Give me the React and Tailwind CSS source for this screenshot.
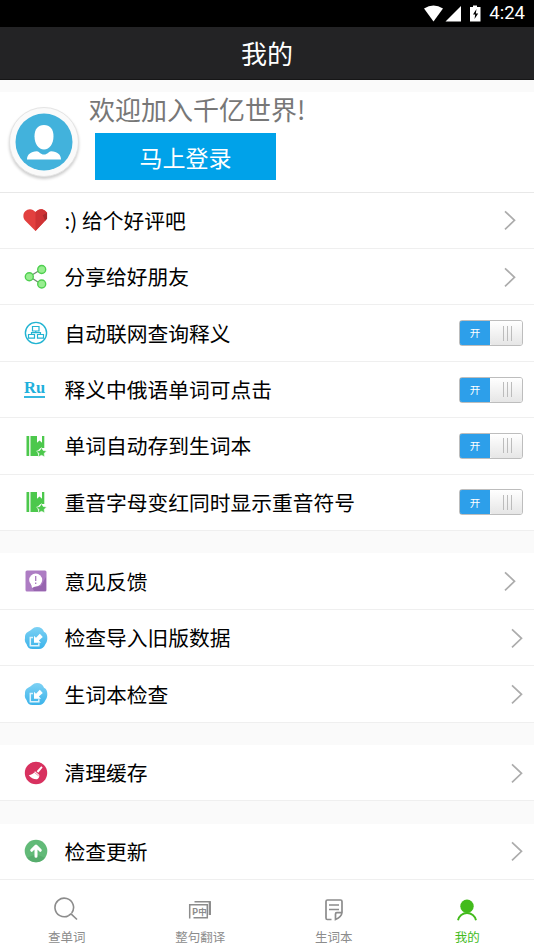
import React, { useState } from 'react';

const HeartIcon = () => (
  <svg width="26" height="24" viewBox="0 0 26 24">
    <path d="M13 23.500 1.900 12.200C-.3 9.500 0 5 2.300 2.900 5.300-.2 10.200 0 13 3.800 16 0 20.300-.2 23.300 2.600 24.500 3.800 25 4 25 5.500L23.500 12.200Z" fill="#e2403f" />
    <path d="M13 3.800C16 0 20.300-.2 23.300 2.600L25 4.500V10l-1.500 2.200L13 23.500Z" fill="#cf3335" />
    <path d="M20.500 7 25 4.500V11l-2 1.500Z" fill="#a92a2d" />
  </svg>
);

const ShareIcon = () => (
  <svg width="24" height="26" viewBox="0 0 24 26">
    <path d="M17 5.500 5.500 12.500 17 20" fill="none" stroke="#6f8f70" strokeWidth="1.300" />
    <g fill="#98ee90" stroke="#4fcf50" strokeWidth="1.400">
      <circle cx="17.700" cy="5.500" r="4" />
      <circle cx="5.300" cy="12.700" r="4" />
      <circle cx="17.700" cy="20" r="4" />
    </g>
  </svg>
);

const NetworkIcon = () => (
  <svg width="24" height="24" viewBox="0 0 24 24" fill="none" stroke="#22b4d2">
    <circle cx="12" cy="12" r="10.600" strokeWidth="1.400" />
    <path d="M8.500 5.500h6.500v4.500H8.500ZM4.500 13.500h6v3.700h-6ZM13.500 13.500h6v3.700h-6ZM11.800 10v1.700M7.500 13.500v-1.800h9v1.800" strokeWidth="1.200" />
  </svg>
);

const RuIcon = () => (
  <span className="-mt-[2px] -ml-[2px] block w-[21px] border-b-2 border-[#35b8e0] font-['Liberation_Serif',serif] text-[16.500px] leading-[17px] font-bold text-[#1fb0dc]">
    Ru
  </span>
);

const BookIcon = () => (
  <svg width="22" height="24" viewBox="0 0 22 24">
    <path d="M1.500 2h2.700v20H1.500zM5.500 2h6.500v6.800l2.500-2.200L17 8.800V2h2.300v12h-3.800l-3.200 3 1 5H5.500z" fill="#4cc84c" />
    <path
      d="m16.500 13.500 1.600 2.900 3.400.6-2.400 2.400.5 3.400-3.100-1.500-3.100 1.500.5-3.400-2.400-2.400 3.400-.6Z"
      fill="#4cc84c"
      stroke="#fff"
      strokeWidth=".500"
    />
  </svg>
);

const FeedbackIcon = () => (
  <svg width="22" height="22" viewBox="0 0 22 22">
    <rect x=".5" y=".5" width="21" height="21" rx="1.500" fill="#ad7cc3" />
    <path d="M21 7v14H9l-2-4 9-1Z" fill="#9765af" />
    <circle cx="10.700" cy="10" r="6.500" fill="#fff" />
    <path d="m6 13 1 5 4-2Z" fill="#fff" />
    <path d="M10.700 6v5M10.700 12.500v1.500" stroke="#a879be" strokeWidth="1.300" />
  </svg>
);

const ImportIcon = () => (
  <svg width="24" height="24" viewBox="0 0 24 24">
    <defs>
      <linearGradient id="cloud" x1="0" y1="0" x2="0" y2="1">
        <stop offset="0" stopColor="#7dd1f4" />
        <stop offset="1" stopColor="#3bb3ea" />
      </linearGradient>
    </defs>
    <path d="M4.500 5.500C7 4.500 9 1 13 1c3.500 0 6 2 7 4.800 2.500 1.200 3.300 3.200 3.300 6.200 0 2-.2 4-1.800 6-1.500 3.500-3.500 5-6.500 5H8.500C5 23 3.300 21 2.500 18 .8 16 .6 14 1 12c-.2-2.500.5-5.200 3.500-6.500Z" fill="url(#cloud)" />
    <path d="M9 11.500H6.300v8.300h8.500v-2.600" fill="none" stroke="#dff3fc" strokeWidth="1.500" />
    <path d="M10 9.800v7h7l-2.200-2.200 4-3.600-3-3.300-3.800 4Z" fill="#fff" />
  </svg>
);

const CleanIcon = () => (
  <svg width="24" height="24" viewBox="0 0 24 24">
    <circle cx="12" cy="12" r="11.200" fill="#d8315f" />
    <path d="m17.300 5.300 1.300 1.200-4.300 5.200-1.700-1.400Z" fill="#fff" />
    <path d="m11 10.300 4.300 3.600c.2 2.100-.5 3.300-2.200 4.300-3.300.2-6-1-8.300-4 2.600-.2 4.600-1.400 6.200-3.900Z" fill="#fff" />
    <path d="m10.200 11.300 4.500 3.600" stroke="#d8315f" strokeWidth=".500" />
  </svg>
);

const UpdateIcon = () => (
  <svg width="24" height="24" viewBox="0 0 24 24">
    <circle cx="12" cy="12" r="11.300" fill="#62ba78" />
    <path d="M3 18.700a11.300 11.300 0 0 0 18 0L14 16h-4Z" fill="#57ad6d" />
    <path d="M12 17.300V8M7.700 11.300 12 7l4.300 4.300" fill="none" stroke="#fff" strokeWidth="3" strokeLinecap="round" strokeLinejoin="round" />
  </svg>
);

const SearchTabIcon = () => (
  <svg width="26" height="26" viewBox="1 0 26 26" fill="none" stroke="#8c8c8c" strokeWidth="1.600">
    <path d="M18.700 17A9.300 9.300 0 1 0 15.500 19.700M15.500 19.700l2.300-1.700M17.500 17.300l6.500 6.200" />
  </svg>
);

const TranslateTabIcon = () => (
  <svg width="26" height="26" viewBox="0 0 26 26" fill="none" stroke="#8c8c8c" strokeWidth="1.500">
    <path d="M2.700 22.500V8.700h17.600v13H6.500M7.500 5.700H23V19" />
    <path d="M22.800 5.500V19" strokeWidth="2.200" />
    <text x="5.300" y="18.500" fill="#8c8c8c" stroke="none" fontSize="9" fontWeight="700" fontFamily="Roboto, sans-serif">P</text>
    <text x="11.300" y="18.500" fill="#8c8c8c" stroke="none" fontSize="8.500" fontWeight="700" fontFamily="'Noto Sans CJK SC', sans-serif">中</text>
  </svg>
);

const NoteTabIcon = () => (
  <svg width="26" height="26" viewBox="0 0 26 26" fill="none" stroke="#8c8c8c" strokeWidth="1.700">
    <path d="M10.500 23.500H6.300Q5 23.500 5 22V5.500Q5 4 6.500 4h13Q21 4 21 5.500v11q-.5 4.500-6.500 7V18q0-1.300 1.300-1.300H21M8 9h10M8 13.500h10" />
  </svg>
);

const MeTabIcon = () => (
  <svg width="26" height="26" viewBox="0 0 26 26">
    <circle cx="13" cy="10.200" r="6.700" fill="#43bb1c" />
    <path d="M4 24.300a9.200 9.200 0 0 1 18 0" fill="none" stroke="#43bb1c" strokeWidth="1.900" />
  </svg>
);

const Chevron = () => (
  <svg width="12" height="20" viewBox="0 0 12 20" fill="none" stroke="#acacac" strokeWidth="1.700">
    <path d="M1 1.300 10.500 10.300 1 19.300" />
  </svg>
);

const Toggle = ({ on, onToggle }) => (
  <button
    onClick={onToggle}
    className={`flex h-[26px] w-[64px] overflow-hidden rounded-[3px] border border-[#bdbdbd] ${on ? "flex-row" : "flex-row-reverse"}`}
  >
    <span className={`-my-px -ml-px flex h-[26px] w-[31px] items-center justify-center rounded-l-[3px] border border-r-0 text-[10.500px] text-white ${on ? "border-[#2583c4] bg-[#2d9fea]" : "border-gray-400 bg-gray-400"}`}>
      {on ? "开" : "关"}
    </span>
    <span className="flex h-full flex-1 items-center justify-center gap-[3px] rounded-l-[2px] bg-linear-to-b from-white to-[#e6e6e6] pl-[2px]">
      <i className="h-[15px] w-px bg-[#bcbcbc]" />
      <i className="h-[15px] w-px bg-[#bcbcbc]" />
      <i className="h-[15px] w-px bg-[#bcbcbc]" />
    </span>
  </button>
);

const groups = [
  [
    { id: 'rate', label: ':) 给个好评吧', icon: HeartIcon, arrow: 'pr-[18px]' },
    { id: 'share', label: '分享给好朋友', icon: ShareIcon, arrow: 'pr-[18px]' },
    { id: 'online', label: '自动联网查询释义', icon: NetworkIcon, toggle: true },
    { id: 'click', label: '释义中俄语单词可点击', icon: RuIcon, toggle: true },
    { id: 'save', label: '单词自动存到生词本', icon: BookIcon, toggle: true },
    { id: 'stress', label: '重音字母变红同时显示重音符号', icon: BookIcon, toggle: true },
  ],
  [
    { id: 'feedback', label: '意见反馈', icon: FeedbackIcon, arrow: 'pr-[18px]' },
    { id: 'import', label: '检查导入旧版数据', icon: ImportIcon, arrow: 'pr-[11px]' },
    { id: 'check', label: '生词本检查', icon: ImportIcon, arrow: 'pr-[11px]' },
  ],
  [{ id: 'clean', label: '清理缓存', icon: CleanIcon, arrow: 'pr-[11px]' }],
  [{ id: 'update', label: '检查更新', icon: UpdateIcon, arrow: 'pr-[11px]' }],
];

const tabs = [
  { label: '查单词', icon: SearchTabIcon },
  { label: '整句翻译', icon: TranslateTabIcon },
  { label: '生词本', icon: NoteTabIcon },
  { label: '我的', icon: MeTabIcon, active: true },
];

const App = () => {
  const [settings, setSettings] = useState({ online: true, click: true, save: true, stress: true });

  const toggle = (id) => {
    setSettings({ ...settings, [id]: !settings[id] });
  };

  return (
    <div className="flex h-[950px] w-[534px] flex-col overflow-hidden bg-[#fafafa] font-['Noto_Sans_CJK_SC',sans-serif]">
      {/* Status bar */}
      <div className="flex h-[27px] shrink-0 items-center justify-end bg-black pr-[9px] text-white">
        <svg width="60" height="18" viewBox="0 0 60 18" fill="#fff">
          <path d="M0 3.500Q9.500-2.300 19 3.500L9.500 16.500Z" />
          <path d="M37 1v15.500H21.500Z" />
          <path d="M49 .500h4V2h3.500v14.500h-10.500V2h3Z" />
          <path d="m52.500 4-3.500 5.500h2.200L50.500 14l3.700-5.500h-2.400Z" fill="#000" />
        </svg>
        <span className="ml-[5px] font-[Roboto,sans-serif] text-[18.500px] leading-[27px]">4:24</span>
      </div>

      <header className="flex h-[53px] shrink-0 items-center justify-center border-b border-[#161617] bg-[#232325] pb-[2px] text-[26px] text-white">
        我的
      </header>

      {/* Profile */}
      <div className="mt-[12px] flex h-[100.500px] shrink-0 border-b border-[#e8e8e8] bg-white">
        <div className="mt-[15px] ml-[9px] flex h-[70px] w-[70px] items-center justify-center rounded-full border border-[#e4e4e4] bg-[#fafafa] shadow-[0_2px_3px_rgba(0,0,0,0.2)]">
          <svg width="58" height="58" viewBox="0 0 58 58">
            <circle cx="29" cy="29" r="28.500" fill="#42b2dc" />
            <path d="M29 12c6 0 9.500 4 9.500 11.500 0 7-4 13-9.500 13s-9.500-6-9.500-13C19.500 16 23 12 29 12Z" fill="#fff" />
            <path d="M12 46.500c0-5 3.500-8 10-8.300 2 0 3.500 3.300 7 3.300s5-3.300 7-3.300c6.500.3 10 3.300 10 8.300Z" fill="#fff" />
          </svg>
        </div>
        <div className="ml-[10px]">
          <div className="h-[41px] text-[26px] leading-[33px] text-[#777]">欢迎加入千亿世界!</div>
          <button className="ml-[6px] block h-[47px] w-[181px] bg-[#00a2e9] text-[23px] leading-[46px] text-white">
            马上登录
          </button>
        </div>
      </div>

      {/* Menu groups */}
      <div className="flex flex-col gap-[22.300px]">
        {groups.map((group) => (
          <div key={group[0].id}>
            {group.map((item) => (
              <div key={item.id} className="flex h-[56.450px] items-center border-b border-[#efefef] bg-white">
                <div className="ml-[23px] flex w-[25px] items-center justify-center">
                  <item.icon />
                </div>
                <span className="ml-[16.500px] flex-1 pb-px text-[20.750px] leading-[30px] whitespace-nowrap text-black">{item.label}</span>
                {item.toggle ? (
                  <div className="pr-[11px]">
                    <Toggle on={settings[item.id]} onToggle={() => toggle(item.id)} />
                  </div>
                ) : (
                  <div className={item.arrow}>
                    <Chevron />
                  </div>
                )}
              </div>
            ))}
          </div>
        ))}
      </div>

      {/* Bottom tabs */}
      <nav className="grid flex-1 grid-cols-4 bg-white">
        {tabs.map((tab) => (
          <button key={tab.label} className="flex flex-col items-center pt-[16px]">
            <tab.icon />
            <span className={`mt-[6px] text-[12.500px] leading-[18px] ${tab.active ? "text-[#43bb1c]" : "text-[#8c8c8c]"}`}>{tab.label}</span>
          </button>
        ))}
      </nav>
    </div>
  );
};

export default App;
